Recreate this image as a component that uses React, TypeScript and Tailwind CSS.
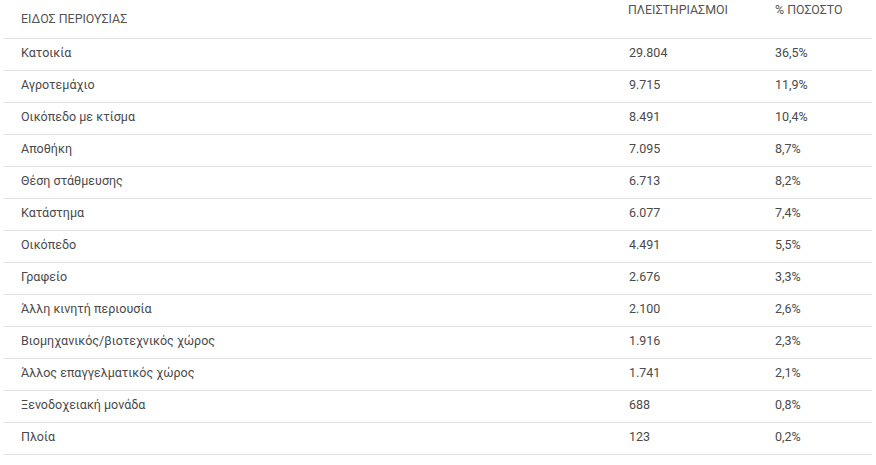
export default function App() {
  const rows = [
    { type: "Κατοικία", auctions: "29.804", pct: "36,5%" },
    { type: "Αγροτεμάχιο", auctions: "9.715", pct: "11,9%" },
    { type: "Οικόπεδο με κτίσμα", auctions: "8.491", pct: "10,4%" },
    { type: "Αποθήκη", auctions: "7.095", pct: "8,7%" },
    { type: "Θέση στάθμευσης", auctions: "6.713", pct: "8,2%" },
    { type: "Κατάστημα", auctions: "6.077", pct: "7,4%" },
    { type: "Οικόπεδο", auctions: "4.491", pct: "5,5%" },
    { type: "Γραφείο", auctions: "2.676", pct: "3,3%" },
    { type: "Άλλη κινητή περιουσία", auctions: "2.100", pct: "2,6%" },
    { type: "Βιομηχανικός/βιοτεχνικός χώρος", auctions: "1.916", pct: "2,3%" },
    { type: "Άλλος επαγγελματικός χώρος", auctions: "1.741", pct: "2,1%" },
    { type: "Ξενοδοχειακή μονάδα", auctions: "688", pct: "0,8%" },
    { type: "Πλοία", auctions: "123", pct: "0,2%" },
  ]

  return (
    <div className="w-[876px] h-[465px] bg-white px-[4px] font-['Roboto',sans-serif]">
      <div className="grid grid-cols-[609px_146px_1fr] h-[39px] border-b border-[#e0e0e0] text-[12.4px] leading-[16px] text-[#555]">
        <div className="pl-[17px] pt-[11px]">ΕΙΔΟΣ ΠΕΡΙΟΥΣΙΑΣ</div>
        <div className="pl-[15px] pt-[2px]">ΠΛΕΙΣΤΗΡΙΑΣΜΟΙ</div>
        <div className="pl-[16px] pt-[2px]">% ΠΟΣΟΣΤΟ</div>
      </div>
      {rows.map((row, i) => (
        <div
          key={i}
          className="grid grid-cols-[609px_146px_1fr] h-[32px] border-b border-[#e0e0e0] text-[12.5px] leading-[20px] text-[#4a4a4a] pt-[4px]"
        >
          <div className="pl-[17px]">{row.type}</div>
          <div className="pl-[16px]">{row.auctions}</div>
          <div className="pl-[16px]">{row.pct}</div>
        </div>
      ))}
    </div>
  )
}
